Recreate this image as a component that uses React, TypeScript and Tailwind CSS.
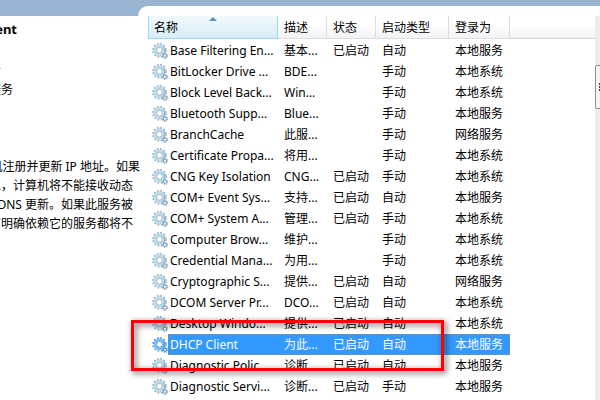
const services = [
  { name: 'Base Filtering En...', desc: '基本...', status: '已启动', startup: '自动', logon: '本地服务' },
  { name: 'BitLocker Drive ...', desc: 'BDE...', status: '', startup: '手动', logon: '本地系统' },
  { name: 'Block Level Back...', desc: 'Win...', status: '', startup: '手动', logon: '本地系统' },
  { name: 'Bluetooth Supp...', desc: 'Blue...', status: '', startup: '手动', logon: '本地服务' },
  { name: 'BranchCache', desc: '此服...', status: '', startup: '手动', logon: '网络服务' },
  { name: 'Certificate Propa...', desc: '将用...', status: '', startup: '手动', logon: '本地系统' },
  { name: 'CNG Key Isolation', desc: 'CNG...', status: '已启动', startup: '手动', logon: '本地系统' },
  { name: 'COM+ Event Sys...', desc: '支持...', status: '已启动', startup: '自动', logon: '本地服务' },
  { name: 'COM+ System A...', desc: '管理...', status: '已启动', startup: '手动', logon: '本地系统' },
  { name: 'Computer Brow...', desc: '维护...', status: '', startup: '手动', logon: '本地系统' },
  { name: 'Credential Mana...', desc: '为用...', status: '', startup: '手动', logon: '本地系统' },
  { name: 'Cryptographic S...', desc: '提供...', status: '已启动', startup: '自动', logon: '网络服务' },
  { name: 'DCOM Server Pr...', desc: 'DCO...', status: '已启动', startup: '自动', logon: '本地系统' },
  { name: 'Desktop Windo...', desc: '提供...', status: '已启动', startup: '自动', logon: '本地系统' },
  { name: 'DHCP Client', desc: '为此...', status: '已启动', startup: '自动', logon: '本地服务' },
  { name: 'Diagnostic Polic...', desc: '诊断...', status: '已启动', startup: '自动', logon: '本地服务' },
  { name: 'Diagnostic Servi...', desc: '诊断...', status: '已启动', startup: '手动', logon: '本地服务' },
]

const headers = ['描述', '状态', '启动类型', '登录为']

function GearIcon({ active }: { active: boolean }) {
  const teeth = active ? '#5a9fdc' : '#8eadc4'
  const ring = active ? '#7cbcf2' : '#bcdcec'
  const edge = active ? '#3f8cd0' : '#86a5bd'
  return (
    <svg viewBox="0 0 16 16" className="size-4 shrink-0" aria-hidden="true">
      <circle cx="7.5" cy="7.3" r="6.4" fill="none" stroke={teeth} strokeWidth="1.8" strokeDasharray="1.75 1.601" />
      <circle cx="7.5" cy="7.3" r="4.5" fill="none" stroke={ring} strokeWidth="2.9" />
      <circle cx="7.5" cy="7.3" r="2.9" fill="#fff" stroke={edge} strokeWidth="0.8" />
      <path d="M11.3 3.6a5.3 5.3 0 0 1 0 7.4" fill="none" stroke={edge} strokeWidth="0.9" />
      <circle cx="13" cy="12.8" r="2.6" fill="none" stroke={teeth} strokeWidth="1.2" strokeDasharray="1.1 0.942" />
      <circle cx="13" cy="12.8" r="1.6" fill="#fff" stroke={edge} strokeWidth="1.1" />
    </svg>
  )
}

function Details() {
  return (
    <aside className="w-[148px] shrink-0 overflow-hidden whitespace-nowrap pt-1">
      <h2 className="flex h-5 w-[17px] items-center justify-end text-[13px] font-bold">Client</h2>
      <div className="mt-5 leading-5">
        <p className="flex w-px justify-end">务</p>
        <p className="flex w-[13px] justify-end">服务</p>
      </div>
      <div className="mt-[57px] leading-[19px]">
        <p className="flex justify-end pr-2">机注册并更新 IP 地址。如果</p>
        <p className="flex justify-end pr-[15px]">止，计算机将不能接收动态</p>
        <p className="flex justify-end pr-[15px]">DNS 更新。如果此服务被</p>
        <p className="flex justify-end pr-[15px]">有明确依赖它的服务都将不</p>
      </div>
    </aside>
  )
}

function ServiceTable() {
  return (
    <table className="w-full table-fixed border-separate border-spacing-0 text-left leading-[19px]">
      <colgroup>
        <col className="w-[130px]" />
        <col className="w-[49px]" />
        <col className="w-[49px]" />
        <col className="w-[73px]" />
        <col className="w-[61px]" />
        <col />
      </colgroup>
      <thead>
        <tr className="h-[23px]">
          <th className="relative border-x border-b border-[#96d9f9] bg-linear-to-b from-[#f2f9fc] to-[#d8ecf6] p-0 pl-[5px] font-normal">
            名称
            <svg viewBox="0 0 8 4" className="absolute top-px left-[60px] h-1 w-2" aria-hidden="true">
              <path d="M4 0 8 4H0Z" fill="#5f93ab" />
            </svg>
          </th>
          {headers.map((title) => (
            <th key={title} className="border-r border-b border-[#dcdde0] bg-linear-to-b from-white from-40% to-[#f1f2f4] p-0 pl-[6px] font-normal">
              {title}
            </th>
          ))}
          <td className="border-b border-[#d5d5d5] bg-linear-to-b from-white from-40% to-[#f1f2f4] p-0" />
        </tr>
      </thead>
      <tbody>
        <tr className="h-px">
          <td className="p-0" colSpan={6} />
        </tr>
        {services.map((service) => {
          const selected = service.name === 'DHCP Client'
          const cell = selected
            ? 'border-y border-dotted border-[#8d8a86] bg-[#3399ff] p-0 pl-[6px] text-white'
            : 'border-y border-transparent p-0 pl-[6px]'
          return (
            <tr key={service.name} className="h-[21px] whitespace-nowrap">
              <td className="p-0 pl-1">
                <div className="flex items-center">
                  <GearIcon active={selected} />
                  <span
                    className={
                      selected
                        ? 'grow border-y border-l border-dotted border-[#8d8a86] bg-[#3399ff] pl-px text-white'
                        : 'grow border-y border-l border-transparent pl-px'
                    }
                  >
                    {service.name}
                  </span>
                </div>
              </td>
              <td className={cell}>{service.desc}</td>
              <td className={cell}>{service.status}</td>
              <td className={cell}>{service.startup}</td>
              <td className={selected ? `${cell} border-r` : cell}>{service.logon}</td>
              <td className="p-0" />
            </tr>
          )
        })}
      </tbody>
    </table>
  )
}

function Scrollbar() {
  return (
    <div className="w-[5px] shrink-0 overflow-hidden bg-[#ececec] pt-[49px]">
      <div className="flex h-11 w-4 flex-col justify-center gap-px rounded-xs border border-[#8f8f8f] bg-linear-to-r from-[#f8f8f8] to-[#dcdcdc] pl-[3px]">
        <span className="h-[2px] w-2 bg-[#444]" />
        <span className="h-[2px] w-2 bg-[#444]" />
        <span className="h-[2px] w-2 bg-[#444]" />
      </div>
    </div>
  )
}

export default function App() {
  return (
    <div className="relative flex h-screen flex-col overflow-hidden bg-white font-['Noto_Sans','Noto_Sans_CJK_SC',sans-serif] text-[12px] text-black">
      <header className="h-4 shrink-0 bg-[#99b4d1] pt-[6px] pl-[138px]">
        <div className="h-[10px] rounded-tl-[10px] bg-white" />
      </header>
      <main className="flex min-h-0 grow">
        <Details />
        <section className="min-w-0 grow">
          <ServiceTable />
        </section>
        <Scrollbar />
      </main>
      <div className="pointer-events-none absolute top-[320px] left-[131px] h-[51px] w-[313px] border-3 border-[#fe0000] drop-shadow-[2px_2px_3px_rgba(0,0,0,0.7)]" />
    </div>
  )
}
